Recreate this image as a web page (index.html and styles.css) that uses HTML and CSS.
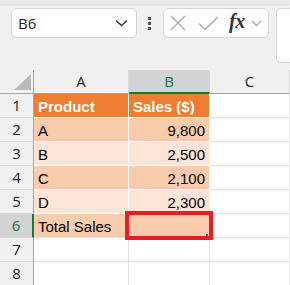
FILE: index.html
```html
<!DOCTYPE html>
<html lang="en">
<head>
  <meta charset="UTF-8">
  <title>Sales</title>
  <link rel="stylesheet" href="styles.css">
</head>
<body>

  <!-- 编辑栏 -->
  <div class="topline"></div>
  <div class="toolbar">
    <div class="namebox">
      <span>B6</span>
      <svg width="13" height="8" viewBox="0 0 13 8">
        <polyline points="1 1.5 6.5 6.5 12 1.5"></polyline>
      </svg>
    </div>
    <div class="dots">
      <i></i><i></i><i></i>
    </div>
    <div class="fxbox">
      <svg class="ico" width="16" height="16" viewBox="0 0 16 16">
        <path d="M1,1 L15,15 M15,1 L1,15"></path>
      </svg>
      <svg class="ico check" width="21" height="15" viewBox="0 0 21 15">
        <polyline points="1 7.5 7 13.5 20 1"></polyline>
      </svg>
      <span class="fx">fx</span>
      <svg class="ico small" width="11" height="7" viewBox="0 0 11 7">
        <polyline points="1 1 5.5 5.5 10 1"></polyline>
      </svg>
    </div>
    <div class="formula"></div>
  </div>

  <!-- 表格 -->
  <div class="sheet">
    <div class="corner"><div class="tri"></div></div>
    <div class="colhead">A</div>
    <div class="colhead sel">B</div>
    <div class="colhead">C</div>

    <div class="rowhead">1</div>
    <div class="cell head">Product</div>
    <div class="cell head">Sales ($)</div>
    <div class="cell"></div>

    <div class="rowhead">2</div>
    <div class="cell dark">A</div>
    <div class="cell dark num">9,800</div>
    <div class="cell"></div>

    <div class="rowhead">3</div>
    <div class="cell light">B</div>
    <div class="cell light num">2,500</div>
    <div class="cell"></div>

    <div class="rowhead">4</div>
    <div class="cell dark">C</div>
    <div class="cell dark num">2,100</div>
    <div class="cell"></div>

    <div class="rowhead">5</div>
    <div class="cell light">D</div>
    <div class="cell light num">2,300</div>
    <div class="cell"></div>

    <div class="rowhead sel">6</div>
    <div class="cell dark last">Total Sales</div>
    <div class="cell dark last active">
      <div class="mark"></div>
      <div class="handle"></div>
    </div>
    <div class="cell"></div>

    <div class="rowhead">7</div>
    <div class="cell"></div>
    <div class="cell"></div>
    <div class="cell"></div>

    <div class="rowhead">8</div>
    <div class="cell"></div>
    <div class="cell"></div>
    <div class="cell"></div>
  </div>

</body>
</html>
```

FILE: styles.css
```css
body{
  margin: 0;
  overflow: hidden;
  background: #f0f0f0;
  font-family: "Open Sans", "Liberation Sans", sans-serif;
}

.topline{
  height: 4px;
  background: #e8e8e8;
  box-shadow: 0 1px 2px rgba(0,0,0,0.08);
}

.toolbar{
  height: 66px;
  box-sizing: border-box;
  padding: 4px 0 0 11px;
  display: flex;
  align-items: flex-start;
}

.namebox{
  width: 126px;
  height: 30px;
  box-sizing: border-box;
  background: #fff;
  border: 1px solid #d4d4d4;
  border-radius: 5px;
  display: flex;
  align-items: center;
  justify-content: space-between;
  padding: 0 8px 0 6px;
  font-size: 15px;
  color: #1f1f1f;
}

.namebox svg{
  fill: none;
  stroke: #333;
  stroke-width: 1.4;
}

.dots{
  width: 3px;
  margin: 9px 12px 0 11px;
  display: flex;
  flex-direction: column;
  gap: 2px;
}

.dots i{
  display: block;
  width: 3px;
  height: 3px;
  background: #555;
}

.fxbox{
  width: 106px;
  height: 30px;
  box-sizing: border-box;
  background: #fff;
  border: 1px solid #d4d4d4;
  border-radius: 5px;
  display: flex;
  align-items: center;
  padding: 0 0 0 6px;
}

.ico{
  fill: none;
  stroke: #a6a6a6;
  stroke-width: 1.3;
  margin-right: 12px;
}

.ico.check{
  margin-right: 10px;
}

.ico.small{
  margin: 1px 0 0 6px;
}

.fx{
  font-family: "Liberation Serif", serif;
  font-style: italic;
  font-weight: bold;
  font-size: 20px;
  color: #333;
  letter-spacing: -0.5px;
  margin-top: -3px;
}

.formula{
  margin-left: 7px;
  flex: 1;
  height: 53px;
  background: #fff;
  border: 1px solid #d4d4d4;
  border-right: none;
  border-radius: 5px 0 0 5px;
}

/* 网格 */
.sheet{
  display: grid;
  grid-template-columns: 34px 95px 81px 1fr;
  grid-auto-rows: 24px;
  background: #fff;
}

.sheet > div{
  box-sizing: border-box;
  border-right: 1px solid #e1e1e1;
  border-bottom: 1px solid #e1e1e1;
}

.corner{
  background: #f0f0f0;
  border-right-color: #a3a3a3 !important;
  border-bottom-color: #a3a3a3 !important;
  display: flex;
  align-items: flex-end;
  justify-content: flex-end;
  padding: 0 2px 3px 0;
}

.tri{
  width: 17px;
  height: 16px;
  background: #b9b9b9;
  clip-path: polygon(100% 0, 100% 100%, 0 100%);
}

.colhead{
  background: #f0f0f0;
  border-right-color: #d6d6d6 !important;
  border-bottom-color: #a3a3a3 !important;
  text-align: center;
  font-size: 15px;
  line-height: 23px;
  color: #1f1f1f;
}

.colhead.sel{
  background: #d3d3d3;
  border-bottom: 2px solid #107c41 !important;
  color: #107c41;
}

.rowhead{
  background: #f0f0f0;
  border-right-color: #a3a3a3 !important;
  border-bottom-color: #d6d6d6 !important;
  text-align: center;
  font-size: 15px;
  line-height: 23px;
  color: #1f1f1f;
}

.rowhead.sel{
  background: #d3d3d3;
  border-right: 2px solid #107c41 !important;
  color: #107c41;
}

.cell{
  font-family: "Liberation Sans", Arial, sans-serif;
  font-size: 15px;
  line-height: 21px;
  padding: 2px 4px 0;
  color: #000;
  white-space: nowrap;
}

.head{
  background: #ed7d31;
  color: #fff;
  font-weight: bold;
  border-color: #fff !important;
}

.dark{
  background: #f8cbad;
  border-color: #fff !important;
}

.light{
  background: #fce4d6;
  border-color: #fff !important;
}

.last{
  border-bottom-color: #e1e1e1 !important;
}

.num{
  text-align: right;
}

.active{
  position: relative;
}

.mark{
  position: absolute;
  left: -4px;
  top: -3px;
  width: 88px;
  height: 29px;
  box-sizing: border-box;
  border: 4px solid #ea1c24;
}

.handle{
  position: absolute;
  right: 1px;
  bottom: 1px;
  width: 2px;
  height: 2px;
  background: #3a5dae;
}
```
